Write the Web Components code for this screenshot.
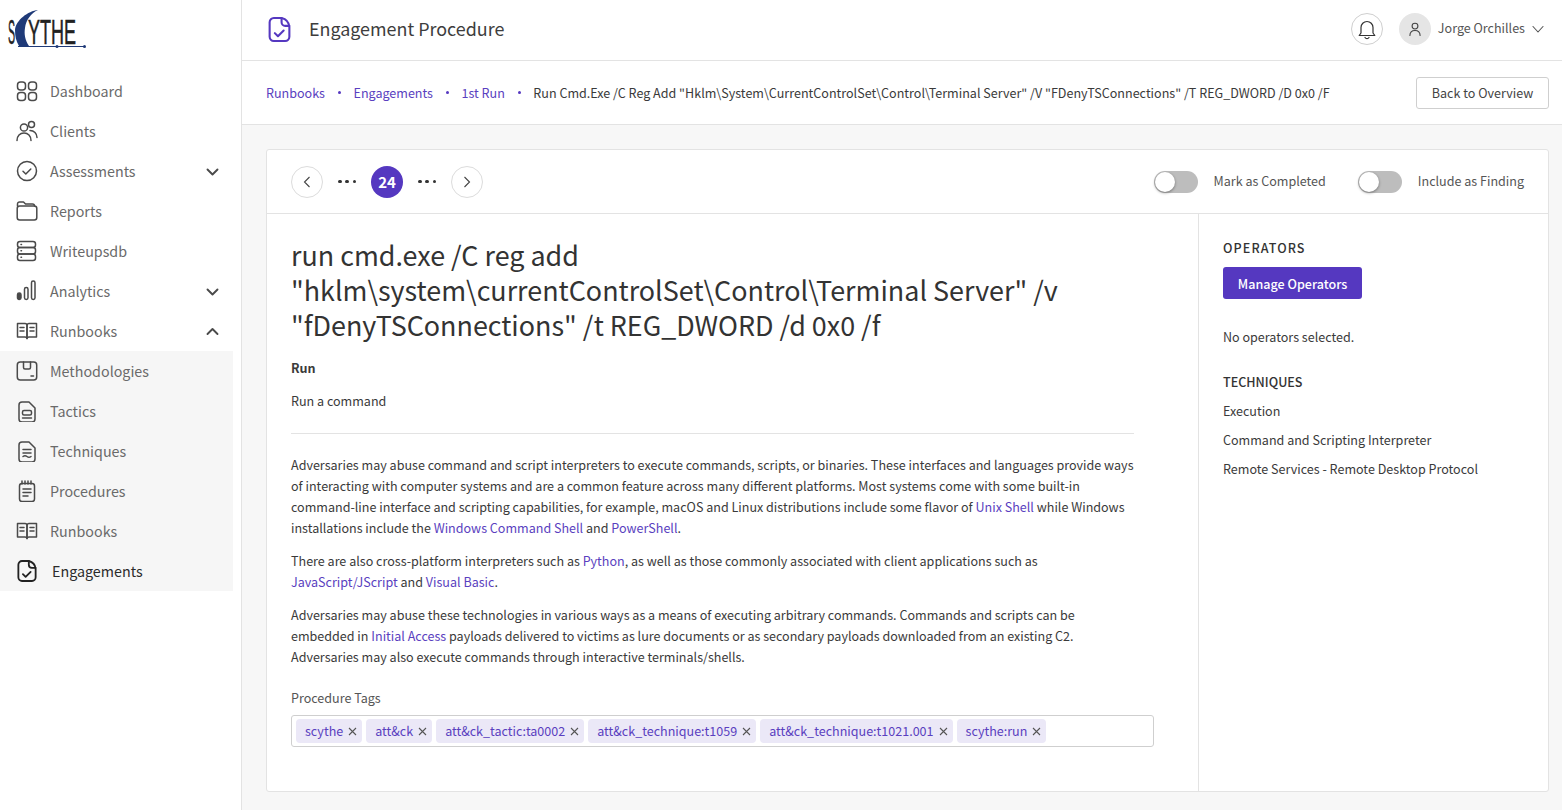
<!DOCTYPE html>
<html>
<head>
<meta charset="utf-8">
<title>Engagement Procedure</title>
<style>
    html, body { margin: 0; height: 100%; }
    body {
        font-family: "Noto Sans CJK SC", "Open Sans", sans-serif;
        font-size: 12.55px;
        color: #3a3a3a;
        overflow: hidden;
    }
</style>
</head>
<body>
<app-shell>
    <side-nav slot="nav"></side-nav>
    <top-bar slot="top" heading="Engagement Procedure" user="Jorge Orchilles"></top-bar>
    <crumb-bar slot="crumbs"></crumb-bar>
    <procedure-card slot="main"></procedure-card>
</app-shell>

<script>
const ICONS = {
    dashboard: '<rect x="1.5" y="2" width="8" height="8" rx="3"/><rect x="12.5" y="2" width="8" height="8" rx="3"/><rect x="1.5" y="12.5" width="8" height="8" rx="3"/><rect x="12.5" y="12.5" width="8" height="8" rx="3"/>',
    clients: '<circle cx="8" cy="7.5" r="3.6"/><circle cx="15.5" cy="4.5" r="3"/><path d="M1 20.5c0-4.5 3-7.5 7-7.5s7 3 7 7.5"/><path d="M14 10.5c4 0 7 3 7 7"/>',
    assess: '<circle cx="11" cy="11" r="9.5"/><path d="M7 11.3l2.8 2.7 5-5"/>',
    reports: '<path d="M1.5 6V4a2 2 0 0 1 2-2h4l2 2h7a2 2 0 0 1 2 2"/><rect x="1.2" y="6" width="19.6" height="14" rx="2.5"/>',
    db: '<rect x="1.5" y="1.5" width="18" height="6" rx="2.5"/><rect x="1.5" y="7.5" width="18" height="6.5" rx="2.5"/><rect x="1.5" y="14" width="18" height="6.5" rx="2.5"/><path d="M5 4.5h.5M5 10.7h.5M5 17.2h.5"/>',
    analytics: '<rect x="1.5" y="13" width="3.5" height="6.5" rx="1.7" fill="currentColor"/><rect x="8.5" y="7.5" width="3.5" height="12" rx="1.7"/><rect x="15.5" y="1" width="3.5" height="18.5" rx="1.7"/>',
    book: '<path d="M1.5 3.5h7.5a2 2 0 0 1 2 2v13a2 2 0 0 0-2-1.5H1.5z"/><path d="M20.5 3.5H13a2 2 0 0 0-2 2v13a2 2 0 0 1 2-1.5h7.5z"/><path d="M4 7.5h4M4 11h4M14 7.5h4M14 11h4"/>',
    method: '<rect x="1.3" y="2" width="19.4" height="18" rx="3"/><path d="M7.5 2v5.500a1.500 1.500 0 0 0 1.500 1.500h4a1.500 1.500 0 0 0 1.500-1.500V2"/><path d="M15 16h2.500"/>',
    tactic: '<path d="M3 5a3 3 0 0 1 3-3h7l6 6v11a3 3 0 0 1-3 3H6a3 3 0 0 1-3-3z"/><rect x="6.500" y="10.500" width="9" height="4.500" rx="1.500"/><path d="M6.500 18h9"/>',
    technique: '<path d="M3 5a3 3 0 0 1 3-3h7l6 6v11a3 3 0 0 1-3 3H6a3 3 0 0 1-3-3z"/><path d="M7 9.500h8M7 13h8M7 16.500c1.500-1.200 2.500-1.200 4 0s2.500 1.200 4 0"/>',
    procedure: '<rect x="3.500" y="3.500" width="15" height="18" rx="2.500"/><path d="M6 1v3M9 1v3M12 1v3M15 1v3M7 9h8M7 12.500h8M7 16h5"/>',
    bell: '<path d="M5 15V9.500a6 6 0 0 1 12 0V15l1.800 2.500H3.200z"/><path d="M9 19.500a2.300 2.300 0 0 0 4 0"/>',
    person: '<circle cx="11" cy="7" r="4"/><path d="M4 20c0-4.500 3-7 7-7s7 2.500 7 7"/>'
};

const ENGAGE = '<path d="M1.500 6a4 4 0 0 1 4-4h7.500c4 1 7 4 7.500 8.500V20a4 4 0 0 1-4 4h-11a4 4 0 0 1-4-4z"/><path d="M13 2v4a3.500 3.500 0 0 0 3.500 3.500h4"/><path d="M6.500 16.500l3 3 5.500-5.500"/>';

function icon(name, size, stroke) {
    return `<svg width="${size}" height="${size}" viewBox="0 0 22 22" fill="none" stroke="currentColor"
        stroke-width="${stroke || 1.5}" stroke-linecap="round" stroke-linejoin="round">${ICONS[name]}</svg>`;
}

function engageIcon(w, h, stroke) {
    return `<svg width="${w}" height="${h}" viewBox="0 0 22 26" fill="none" stroke="currentColor"
        stroke-width="${stroke}" stroke-linecap="round" stroke-linejoin="round">${ENGAGE}</svg>`;
}

class AppShell extends HTMLElement {
    constructor() {
        super();
        this.attachShadow({ mode: "open" });
        this.shadowRoot.innerHTML = `
            <style>
                :host { display: grid; grid-template-columns: 242px 1fr; height: 810px; background: #fff; }
                .right { display: flex; flex-direction: column; min-width: 0; background: #f7f7f7; }
                .main { padding: 24px 13px 0 24px; }
            </style>
            <slot name="nav"></slot>
            <div class="right">
                <slot name="top"></slot>
                <slot name="crumbs"></slot>
                <div class="main"><slot name="main"></slot></div>
            </div>
        `;
    }
}

class NavItem extends HTMLElement {
    constructor() {
        super();
        this.attachShadow({ mode: "open" });
    }

    connectedCallback() {
        const chevron = this.getAttribute("chevron");
        const name = this.getAttribute("icon");
        const active = this.hasAttribute("active");
        this.shadowRoot.innerHTML = `
            <style>
                :host { display: block; }
                .row {
                    height: 40px;
                    display: flex;
                    align-items: center;
                    padding-left: 16px;
                    color: ${active ? "#2b2b2b" : "#6a6a6a"};
                    font-size: 14.3px;
                    line-height: 20px;
                }
                .ic { width: 22px; height: 22px; margin-right: ${active ? 14 : 12}px; color: ${active ? "#222" : "#4a4a4a"}; display: flex; align-items: center; justify-content: center; }
                .label { flex: 1; }
                .chev { margin-right: 22px; width: 13px; height: 13px; color: #4a4a4a; display: flex; }
            </style>
            <div class="row">
                <span class="ic">${name === "engage" ? engageIcon(20, 24, 2) : icon(name, 22)}</span>
                <span class="label"><slot></slot></span>
                ${chevron ? `<svg class="chev" viewBox="0 0 13 13" fill="none" stroke="currentColor" stroke-width="1.900" stroke-linecap="round" stroke-linejoin="round"><path d="${chevron === "up" ? "M1.500 9l5-5 5 5" : "M1.500 4.500l5 5 5-5"}"/></svg>` : ""}
            </div>
        `;
    }
}

class SideNav extends HTMLElement {
    constructor() {
        super();
        this.attachShadow({ mode: "open" });
        this.shadowRoot.innerHTML = `
            <style>
                :host { display: block; border-right: 1px solid #e3e3e3; background: #fff; }
                .logo { height: 71px; }
                .logo svg { display: block; }
                .sub { background: #f6f6f6; width: 233px; }
            </style>
            <div class="logo">
                <svg width="90" height="60" viewBox="0 0 90 60">
                    <path d="M38 10C28 11 16 20 15 30c0 6 1 11 4 16h10c-4-6-5-12-4-18 1-8 6-15 13-18z" fill="#1f3a78"/>
                    <text transform="translate(8 44) scale(.53 1.800)" font-family="Liberation Sans" font-size="20" fill="#222" stroke="#222" stroke-width=".3">S</text>
                    <text transform="translate(28 44) scale(.9 1.800)" font-family="Liberation Sans" font-size="20" fill="#222" stroke="#222" stroke-width=".3">YTHE</text>
                    <path d="M18 46.500h67" stroke="#1f3a78" stroke-width="1.200"/>
                    <circle cx="57" cy="46.500" r="1.500" fill="#1f3a78"/>
                    <circle cx="84.500" cy="46.500" r="1.500" fill="#1f3a78"/>
                </svg>
            </div>
            <nav-item icon="dashboard">Dashboard</nav-item>
            <nav-item icon="clients">Clients</nav-item>
            <nav-item icon="assess" chevron="down">Assessments</nav-item>
            <nav-item icon="reports">Reports</nav-item>
            <nav-item icon="db">Writeupsdb</nav-item>
            <nav-item icon="analytics" chevron="down">Analytics</nav-item>
            <nav-item icon="book" chevron="up">Runbooks</nav-item>
            <div class="sub">
                <nav-item icon="method">Methodologies</nav-item>
                <nav-item icon="tactic">Tactics</nav-item>
                <nav-item icon="technique">Techniques</nav-item>
                <nav-item icon="procedure">Procedures</nav-item>
                <nav-item icon="book">Runbooks</nav-item>
                <nav-item icon="engage" active>Engagements</nav-item>
            </div>
        `;
    }
}

class TopBar extends HTMLElement {
    constructor() {
        super();
        this.attachShadow({ mode: "open" });
    }

    connectedCallback() {
        this.shadowRoot.innerHTML = `
            <style>
                :host {
                    display: flex;
                    align-items: center;
                    height: 58px;
                    background: #fff;
                    border-bottom: 1px solid #e3e3e3;
                    padding: 0 18px 2px 26px;
                    flex: none;
                }
                .page-ic { color: #5538c0; display: flex; margin-right: 18px; }
                h1 { flex: 1; margin: 0 0 2px; font-size: 17.9px; font-weight: 400; line-height: 26px; color: #3d3d3d; }
                .bell, .avatar { width: 32px; height: 32px; border-radius: 50%; box-sizing: border-box; display: flex; align-items: center; justify-content: center; }
                .bell { border: 1px solid #cfcfcf; color: #333; margin-right: 16px; }
                .avatar { background: #e5e5e5; color: #444; margin-right: 7px; }
                .user { font-size: 12.55px; color: #555; line-height: 20px; margin: 0 7px 2px 0; }
                .down { color: #555; display: block; }
            </style>
            <span class="page-ic">${engageIcon(23, 27, 2)}</span>
            <h1>${this.getAttribute("heading")}</h1>
            <span class="bell">${icon("bell", 22, 1.200)}</span>
            <span class="avatar">${icon("person", 16, 1.500)}</span>
            <span class="user">${this.getAttribute("user")}</span>
            <svg class="down" width="12" height="12" viewBox="0 0 12 12" fill="none" stroke="currentColor" stroke-width="1.100" stroke-linecap="round" stroke-linejoin="round"><path d="M1 3.500l5 5.500 5-5.500"/></svg>
        `;
    }
}

class CrumbBar extends HTMLElement {
    constructor() {
        super();
        this.attachShadow({ mode: "open" });
        const parts = ["Runbooks", "Engagements", "1st Run"];
        const current = 'Run Cmd.Exe /C Reg Add "Hklm\\System\\CurrentControlSet\\Control\\Terminal Server" /V "FDenyTSConnections" /T REG_DWORD /D 0x0 /F';
        this.shadowRoot.innerHTML = `
            <style>
                :host {
                    display: flex;
                    align-items: center;
                    height: 63px;
                    flex: none;
                    background: #fff;
                    border-bottom: 1px solid #e3e3e3;
                    padding: 0 13px 0 24px;
                    font-size: 12.55px;
                    line-height: 20px;
                    white-space: nowrap;
                }
                a { color: #5a3fc0; text-decoration: none; }
                .dot { width: 3px; height: 3px; border-radius: 50%; background: #5538c0; margin: 0 12.5px 0 13px; flex: none; }
                .cur { color: #3a3a3a; flex: 1; }
                button {
                    font: inherit;
                    color: #444;
                    background: #fff;
                    border: 1px solid #cfcfcf;
                    border-radius: 3px;
                    height: 32px;
                    width: 133px;
                    padding: 0;
                    flex: none;
                }
            </style>
            ${parts.map((p) => `<a href="#">${p}</a><span class="dot"></span>`).join("")}
            <span class="cur">${current}</span>
            <button>Back to Overview</button>
        `;
    }
}

class PageDots extends HTMLElement {
    constructor() {
        super();
        this.attachShadow({ mode: "open" });
        this.shadowRoot.innerHTML = `
            <style>
                :host { display: flex; align-items: center; gap: 15px; }
                .arrow { width: 32px; height: 32px; border-radius: 50%; border: 1px solid #dcdcdc; box-sizing: border-box; display: flex; align-items: center; justify-content: center; color: #444; }
                .cur { width: 32px; height: 32px; border-radius: 50%; background: #5538c0; color: #fff; font-weight: 700; font-size: 15px; display: flex; align-items: center; justify-content: center; }
                .more { width: 18px; display: flex; justify-content: space-between; }
                .more i { width: 3.500px; height: 3.500px; border-radius: 50%; background: #333; }
            </style>
            <span class="arrow"><svg width="12" height="12" viewBox="0 0 12 12" fill="none" stroke="currentColor" stroke-width="1.100"><path d="M8.500 1L3.500 6l5 5"/></svg></span>
            <span class="more"><i></i><i></i><i></i></span>
            <span class="cur">24</span>
            <span class="more"><i></i><i></i><i></i></span>
            <span class="arrow"><svg width="12" height="12" viewBox="0 0 12 12" fill="none" stroke="currentColor" stroke-width="1.100"><path d="M3.500 1l5 5-5 5"/></svg></span>
        `;
    }
}

class ToggleField extends HTMLElement {
    constructor() {
        super();
        this.attachShadow({ mode: "open" });
        this.shadowRoot.innerHTML = `
            <style>
                :host { display: flex; align-items: center; gap: 16px; font-size: 12.55px; line-height: 20px; color: #555; }
                .track { width: 44px; height: 22px; border-radius: 11px; background: #bdbdbd; position: relative; }
                .knob { position: absolute; left: 1px; top: 1px; width: 20px; height: 20px; border-radius: 50%; background: #fff; box-shadow: 0 1px 3px rgba(0,0,0,.4); }
                .text { padding-bottom: 2px; }
            </style>
            <span class="track"><span class="knob"></span></span>
            <span class="text"><slot></slot></span>
        `;
    }
}

class TagChip extends HTMLElement {
    constructor() {
        super();
        this.attachShadow({ mode: "open" });
        this.shadowRoot.innerHTML = `
            <style>
                :host { display: inline-flex; align-items: center; height: 24px; background: #ebe8f7; border-radius: 4px; padding: 0 5px 0 9px; color: #5a3fc0; font-size: 12.55px; line-height: 20px; gap: 5px; }
                svg { display: block; color: #555; }
            </style>
            <slot></slot>
            <svg width="9" height="9" viewBox="0 0 9 9" fill="none" stroke="currentColor" stroke-width="1.100"><path d="M1 1l7 7M8 1L1 8"/></svg>
        `;
    }
}

class ProcedureCard extends HTMLElement {
    constructor() {
        super();
        this.attachShadow({ mode: "open" });
        this.shadowRoot.innerHTML = `
            <style>
                :host { display: block; background: #fff; border: 1px solid #e3e3e3; border-radius: 3px; height: 641px; box-sizing: content-box; }
                header { height: 63px; display: flex; align-items: center; padding: 0 24px; border-bottom: 1px solid #e3e3e3; }
                page-dots { flex: 1; }
                toggle-field + toggle-field { margin-left: 32px; }
                .cols { display: grid; grid-template-columns: 932px 1fr; height: 577px; }
                .body { border-right: 1px solid #e3e3e3; padding: 23px 64px 0 24px; }
                h2 { margin: 0 0 15px; font-size: 26.9px; font-weight: 400; line-height: 35px; color: #333; }
                p { margin: 0; font-size: 12.55px; line-height: 21px; color: #3a3a3a; }
                .kind { font-weight: 600; margin-bottom: 12px; }
                hr { border: 0; border-top: 1px solid #e3e3e3; margin: 22px 0 20px; }
                .copy p { margin-bottom: 12px; }
                a { color: #5a3fc0; text-decoration: none; }
                .tags-label { margin: 20px 0 7px; color: #555; }
                .tags { width: 863px; height: 32px; box-sizing: border-box; border: 1px solid #cfcfcf; border-radius: 3px; display: flex; align-items: center; gap: 4px; padding: 0 4px; margin-right: -20px; }
                aside { padding: 24px 24px 0; font-size: 12.55px; line-height: 21px; color: #3a3a3a; }
                h3 { margin: 0; font-size: 12.55px; font-weight: 500; line-height: 20px; color: #333; }
                h3.wide { letter-spacing: 1.100px; }
                .manage { display: block; margin: 9px 0 27px; width: 139px; height: 32px; border: 0; border-radius: 3px; background: #5538c0; color: #fff; font: inherit; font-weight: 500; padding: 0; }
                .none { margin-bottom: 25px; }
                .tech { margin: 8px 0 0; }
            </style>
            <header>
                <page-dots></page-dots>
                <toggle-field>Mark as Completed</toggle-field>
                <toggle-field>Include as Finding</toggle-field>
            </header>
            <div class="cols">
                <div class="body">
                    <h2>run cmd.exe /C reg add "hklm\\system\\currentControlSet\\Control\\Terminal Server" /v "fDenyTSConnections" /t REG_DWORD /d 0x0 /f</h2>
                    <p class="kind">Run</p>
                    <p>Run a command</p>
                    <hr>
                    <div class="copy">
                        <p>Adversaries may abuse command and script interpreters to execute commands, scripts, or binaries. These interfaces and languages provide ways of interacting with computer systems and are a common feature across many different platforms. Most systems come with some built-in command-line interface and scripting capabilities, for example, macOS and Linux distributions include some flavor of <a href="#">Unix Shell</a> while Windows installations include the <a href="#">Windows Command Shell</a> and <a href="#">PowerShell</a>.</p>
                        <p>There are also cross-platform interpreters such as <a href="#">Python</a>, as well as those commonly associated with client applications such as <a href="#">JavaScript/JScript</a> and <a href="#">Visual Basic</a>.</p>
                        <p>Adversaries may abuse these technologies in various ways as a means of executing arbitrary commands. Commands and scripts can be embedded in <a href="#">Initial Access</a> payloads delivered to victims as lure documents or as secondary payloads downloaded from an existing C2. Adversaries may also execute commands through interactive terminals/shells.</p>
                    </div>
                    <p class="tags-label">Procedure Tags</p>
                    <div class="tags">
                        <tag-chip>scythe</tag-chip>
                        <tag-chip>att&amp;ck</tag-chip>
                        <tag-chip>att&amp;ck_tactic:ta0002</tag-chip>
                        <tag-chip>att&amp;ck_technique:t1059</tag-chip>
                        <tag-chip>att&amp;ck_technique:t1021.001</tag-chip>
                        <tag-chip>scythe:run</tag-chip>
                    </div>
                </div>
                <aside>
                    <h3 class="wide">OPERATORS</h3>
                    <button class="manage">Manage Operators</button>
                    <p class="none">No operators selected.</p>
                    <h3>TECHNIQUES</h3>
                    <p class="tech">Execution</p>
                    <p class="tech">Command and Scripting Interpreter</p>
                    <p class="tech">Remote Services - Remote Desktop Protocol</p>
                </aside>
            </div>
        `;
    }
}

customElements.define("app-shell", AppShell);
customElements.define("nav-item", NavItem);
customElements.define("side-nav", SideNav);
customElements.define("top-bar", TopBar);
customElements.define("crumb-bar", CrumbBar);
customElements.define("page-dots", PageDots);
customElements.define("toggle-field", ToggleField);
customElements.define("tag-chip", TagChip);
customElements.define("procedure-card", ProcedureCard);
</script>
</body>
</html>
